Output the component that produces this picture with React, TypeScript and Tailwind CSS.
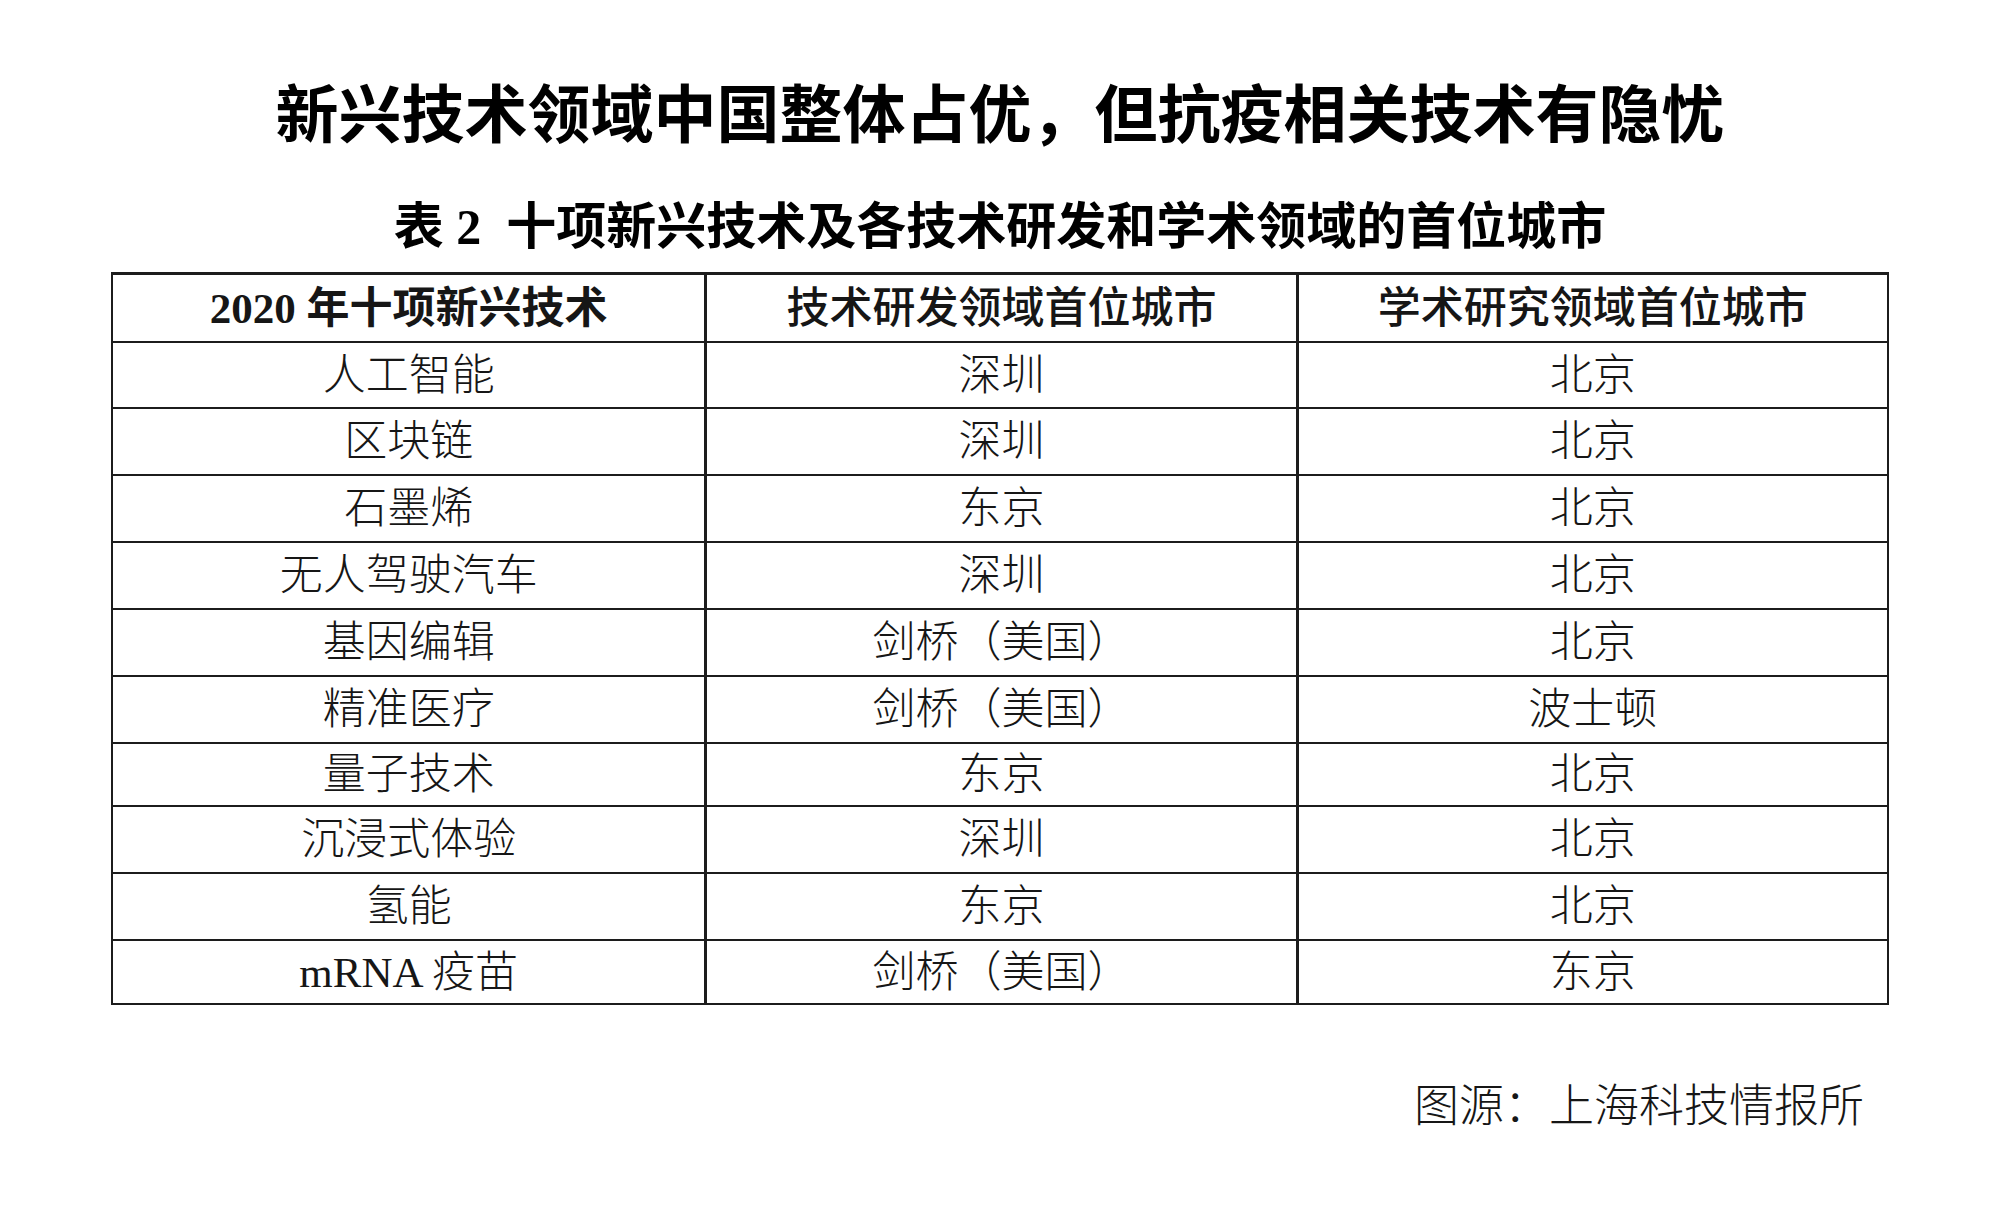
import React from 'react';

const rows: { tech: string; rd: string; academic: string; h: string }[] = [
  { tech: '人工智能', rd: '深圳', academic: '北京', h: 'h-[66px]' },
  { tech: '区块链', rd: '深圳', academic: '北京', h: 'h-[67px]' },
  { tech: '石墨烯', rd: '东京', academic: '北京', h: 'h-[67px]' },
  { tech: '无人驾驶汽车', rd: '深圳', academic: '北京', h: 'h-[67px]' },
  { tech: '基因编辑', rd: '剑桥（美国）', academic: '北京', h: 'h-[67px]' },
  { tech: '精准医疗', rd: '剑桥（美国）', academic: '波士顿', h: 'h-[67px]' },
  { tech: '量子技术', rd: '东京', academic: '北京', h: 'h-[63px]' },
  { tech: '沉浸式体验', rd: '深圳', academic: '北京', h: 'h-[67px]' },
  { tech: '氢能', rd: '东京', academic: '北京', h: 'h-[67px]' },
  { tech: 'mRNA 疫苗', rd: '剑桥（美国）', academic: '东京', h: 'h-[64px]' },
];

const serif = "font-['Liberation_Serif','Noto_Sans_CJK_SC',serif]";

const Cell: React.FC<{ children: React.ReactNode; first?: boolean; bold?: boolean }> = ({ children, first, bold }) => (
  <div
    className={`flex items-center justify-center ${first ? '' : 'border-l-[3px] border-[#1c1c1c]'} ${
      bold ? 'font-bold' : 'font-light'
    } text-[43px] leading-none text-[#161616] whitespace-pre`}
  >
    {children}
  </div>
);

export default function App() {
  return (
    <div className={`w-[2000px] h-[1211px] bg-white flex flex-col items-center ${serif}`}>
      <h1 className="mt-[78px] text-[63px] leading-none font-bold text-black font-['Noto_Sans_CJK_SC',sans-serif]">
        新兴技术领域中国整体占优，但抗疫相关技术有隐忧
      </h1>

      <h2 className="mt-[61px] text-[50px] leading-none font-bold text-black whitespace-pre">
        表 2  十项新兴技术及各技术研发和学术领域的首位城市
      </h2>

      {/* table */}
      <div className="mt-[20px] w-[1778px] border-2 border-[#1c1c1c] border-t-[3px]">
        <div className="grid grid-cols-3 h-[66px]">
          <Cell first bold>2020 年十项新兴技术</Cell>
          <div className="flex items-center justify-center border-l-[3px] border-[#1c1c1c] text-[43px] leading-none font-medium text-[#161616]">
            技术研发领域首位城市
          </div>
          <div className="flex items-center justify-center border-l-[3px] border-[#1c1c1c] text-[43px] leading-none font-medium text-[#161616]">
            学术研究领域首位城市
          </div>
        </div>
        {rows.map((r) => (
          <div key={r.tech} className={`grid grid-cols-3 border-t-2 border-[#1c1c1c] ${r.h}`}>
            <Cell first>{r.tech}</Cell>
            <Cell>{r.rd}</Cell>
            <Cell>{r.academic}</Cell>
          </div>
        ))}
      </div>

      <div className="w-full flex justify-end pr-[136px] mt-[80px]">
        <p className="text-[45px] leading-none font-light text-[#161616]">图源：上海科技情报所</p>
      </div>
    </div>
  );
}
